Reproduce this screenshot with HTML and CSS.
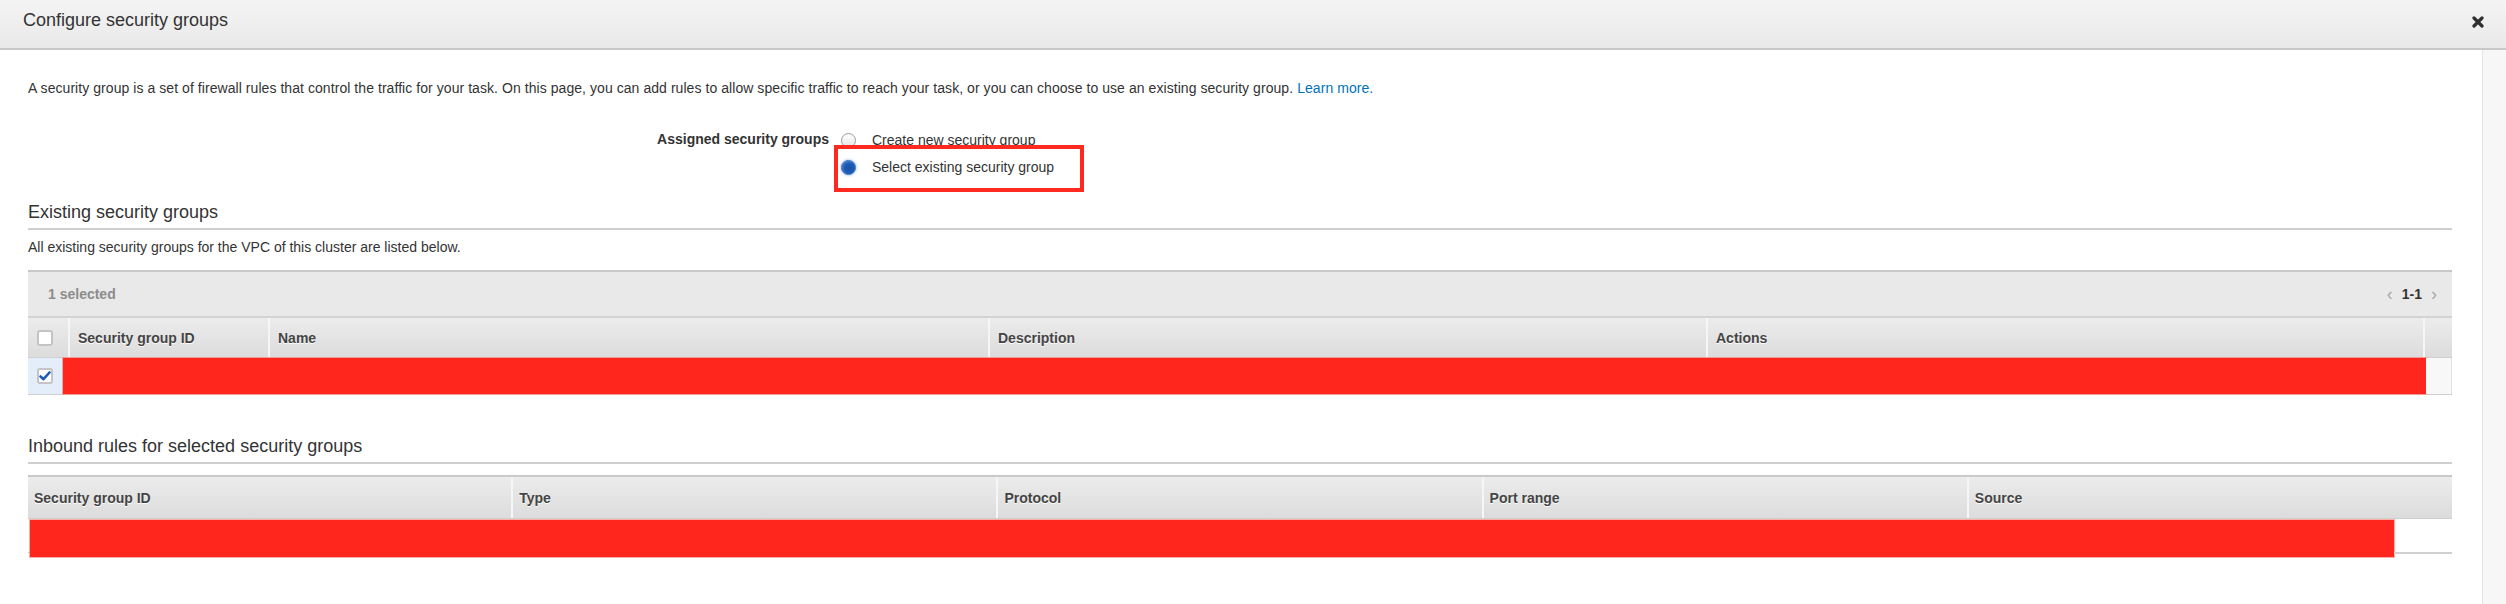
FILE: index.html
```html
<!DOCTYPE html>
<html lang="en">
<head>
<meta charset="utf-8">
<title>Configure security groups</title>
<link rel="stylesheet" href="styles.css">
</head>
<body>
<div class="modal-header">
  <h1 class="modal-title">Configure security groups</h1>
  <span class="close" aria-label="Close">
    <svg width="12" height="12" viewBox="0 0 12 12"><path d="M2 2 L10 10 M10 2 L2 10" stroke="#2f2f2f" stroke-width="3.2" stroke-linecap="round"/></svg>
  </span>
</div>
<div class="main">
  <div class="content">
    <p class="intro">A security group is a set of firewall rules that control the traffic for your task. On this page, you can add rules to allow specific traffic to reach your task, or you can choose to use an existing security group. <a href="#" class="link">Learn more.</a></p>

    <div class="form-row">
      <div class="form-label">Assigned security groups</div>
      <div class="radios">
        <div class="option"><span class="radio"></span><span>Create new security group</span></div>
        <div class="option selected"><span class="radio checked"></span><span>Select existing security group</span><span class="highlight"></span></div>
      </div>
    </div>

    <h2 class="section-title">Existing security groups</h2>
    <p class="section-desc">All existing security groups for the VPC of this cluster are listed below.</p>

    <div class="table">
      <div class="toolbar">
        <span class="count">1 selected</span>
        <span class="pager"><span class="chev">&#8249;</span><b>1-1</b><span class="chev">&#8250;</span></span>
      </div>
      <div class="thead">
        <div class="th c-check"><span class="checkbox"></span></div>
        <div class="th c-id">Security group ID</div>
        <div class="th c-name">Name</div>
        <div class="th c-desc">Description</div>
        <div class="th c-act">Actions</div>
        <div class="th c-end"></div>
      </div>
      <div class="trow">
        <div class="td-check"><span class="checkbox on"><svg width="12" height="10" viewBox="0 0 12 10"><path d="M1.5 5.5 L4.5 8.2 L10.5 1.5" fill="none" stroke="#1b5db5" stroke-width="2.6" stroke-linecap="round" stroke-linejoin="round"/></svg></span></div>
        <div class="redact"></div>
        <div class="td-end"></div>
      </div>
    </div>

    <h2 class="section-title second">Inbound rules for selected security groups</h2>

    <div class="table inbound">
      <div class="thead">
        <div class="th col5">Security group ID</div>
        <div class="th col5">Type</div>
        <div class="th col5">Protocol</div>
        <div class="th col5">Port range</div>
        <div class="th col5">Source</div>
      </div>
      <div class="trow2">
        <div class="stub"></div>
        <div class="redact2"></div>
        <div class="tail"></div>
      </div>
    </div>
  </div>
  <div class="scrollbar"></div>
</div>
</body>
</html>
```
FILE: styles.css
```css
html, body {
  margin: 0;
  padding: 0;
  background: #ffffff;
}
body {
  font-family: "Liberation Sans", Arial, Helvetica, sans-serif;
  font-size: 14px;
  color: #444;
  overflow: hidden;
}

.modal-header {
  height: 48px;
  border-bottom: 2px solid #c8c8c8;
  background: linear-gradient(#f4f4f4, #e9e9e9);
  display: flex;
  align-items: flex-start;
  justify-content: space-between;
  padding: 0 22px 0 23px;
}
.modal-title {
  margin: 10px 0 0 0;
  font-size: 18px;
  line-height: 20px;
  font-weight: normal;
  color: #333;
}
.close {
  margin-top: 16px;
  display: flex;
}

.main {
  display: flex;
  height: 554px;
}
.content {
  flex: 1;
  padding: 0 30px 0 28px;
}
.scrollbar {
  width: 23px;
  background: #f7f7f7;
  border-left: 1px solid #e4e4e4;
}

.intro {
  margin: 28px 0 0 0;
  line-height: 20px;
  color: #333;
  letter-spacing: 0.06px;
}
.link {
  color: #0073bb;
  text-decoration: none;
}

.form-row {
  display: flex;
  margin-top: 31px;
}
.form-label {
  width: 801px;
  text-align: right;
  font-weight: bold;
  color: #333;
  line-height: 20px;
  padding-right: 12px;
}
.radios {
  display: flex;
  flex-direction: column;
  gap: 7px;
  padding-top: 1px;
}
.option {
  display: flex;
  align-items: center;
  gap: 16px;
  line-height: 20px;
  color: #333;
  position: relative;
}
.radio {
  width: 15px;
  height: 15px;
  border-radius: 50%;
  box-sizing: border-box;
  border: 1px solid #9c9c9c;
  background: linear-gradient(#ffffff, #e6e6e6);
}
.radio.checked {
  border: 1px solid #2d68bd;
  background: radial-gradient(circle at 55% 55%, #1a54a8 0, #1d5bb5 50%, #4d84d0 72%, #d6e5f7 100%);
  box-shadow: 0 0 3px rgba(70, 140, 230, 0.7);
}
.highlight {
  position: absolute;
  left: -7px;
  top: -12px;
  width: 250px;
  height: 47px;
  box-sizing: border-box;
  border: 4px solid #fe2a20;
}

.section-title {
  margin: 24px 0 0 0;
  font-size: 18px;
  line-height: 22px;
  font-weight: normal;
  color: #333;
  padding-bottom: 5px;
  border-bottom: 2px solid #cfcfcf;
}
.section-title.second {
  margin-top: 40px;
}
.section-desc {
  margin: 7px 0 0 0;
  line-height: 20px;
  color: #333;
}

.table {
  margin-top: 13px;
  border-top: 2px solid #c9c9c9;
}
.table.inbound {
  margin-top: 11px;
}
.toolbar {
  height: 44px;
  background: #e9e9e9;
  border-bottom: 2px solid #d3d3d3;
  display: flex;
  align-items: center;
  justify-content: space-between;
  padding: 0 15px 0 20px;
}
.count {
  font-weight: bold;
  color: #8c8c8c;
}
.pager {
  display: flex;
  align-items: center;
  gap: 9px;
  color: #333;
}
.chev {
  color: #a8a8a8;
  font-size: 18px;
  line-height: 18px;
}

.thead {
  display: flex;
  height: 39px;
  background: linear-gradient(#ececec, #dcdcdc);
  border-bottom: 1px solid #cfcfcf;
}
.inbound .thead {
  height: 41px;
}
.th {
  box-sizing: border-box;
  display: flex;
  align-items: center;
  padding-left: 8px;
  font-weight: bold;
  color: #444;
  text-shadow: 0 1px 0 #fff;
  border-left: 2px solid #f6f6f6;
}
.th:first-child {
  border-left: none;
}
.c-check { width: 40px; padding-left: 9px; }
.c-id { width: 200px; }
.c-name { width: 720px; }
.c-desc { width: 718px; }
.c-act { width: 717px; }
.c-end { width: 29px; }
.col5 { flex: 1; padding-left: 6px; }

.checkbox {
  width: 16px;
  height: 16px;
  box-sizing: border-box;
  border: 2px solid #c4c4c4;
  border-radius: 3px;
  background: #fff;
  display: flex;
  align-items: center;
  justify-content: center;
}

.trow {
  display: flex;
  height: 36px;
  border-bottom: 1px solid #cfcfcf;
}
.td-check {
  width: 35px;
  background: #e3eefa;
  display: flex;
  align-items: center;
  padding-left: 9px;
  box-sizing: border-box;
}
.redact {
  flex: 1;
  background: #fe261d;
  box-shadow: 0 0 0 1px rgba(255, 120, 110, 0.6);
}
.td-end {
  width: 25px;
  background: #f8f8f8;
  border-right: 1px solid #e2e2e2;
}

.trow2 {
  display: flex;
  align-items: flex-start;
}
.stub {
  width: 2px;
  height: 33px;
  border-bottom: 1px solid #c9c9c9;
}
.redact2 {
  width: 2364px;
  height: 37px;
  margin-top: 1px;
  background: #fe261d;
  box-shadow: 0 0 0 1px rgba(255, 120, 110, 0.6);
}
.tail {
  flex: 1;
  height: 33px;
  border-bottom: 2px solid #d0d0d0;
}
```
